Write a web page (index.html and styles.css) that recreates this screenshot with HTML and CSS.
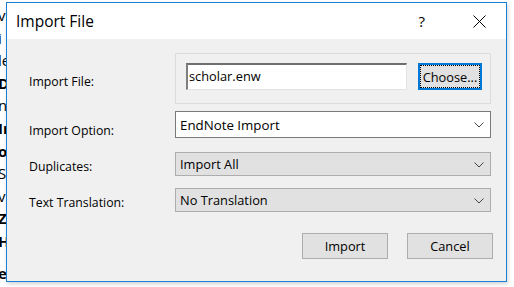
FILE: index.html
```html
<!DOCTYPE html>
<html>
<head>
<meta charset="utf-8">
<link rel="stylesheet" href="styles.css">
</head>
<body>
<div class="desk">
  <div class="page">
    <div class="ln">vo</div>
    <div class="ln">i</div>
    <div class="ln">le</div>
    <div class="ln b">D</div>
    <div class="ln">n</div>
    <div class="ln b">Ir</div>
    <div class="ln b">or</div>
    <div class="ln">Se</div>
    <div class="ln">vi</div>
    <div class="ln b">Zi</div>
    <div class="ln b">H</div>
    <div class="ln b last">e&nbsp;&nbsp;p&nbsp;&nbsp;&nbsp;&nbsp;&nbsp;&nbsp;&nbsp;&nbsp;&nbsp;&nbsp;&nbsp;&nbsp;&nbsp;&nbsp;&nbsp;&nbsp;&nbsp;g&nbsp;&nbsp;&nbsp;&nbsp;&nbsp;&nbsp;&nbsp;&nbsp;&nbsp;&nbsp;&nbsp;&nbsp;&nbsp;&nbsp;&nbsp;&nbsp;&nbsp;&nbsp;&nbsp;&nbsp;&nbsp;&nbsp;&nbsp;&nbsp;&nbsp;&nbsp;&nbsp;&nbsp;&nbsp;&nbsp;&nbsp;&nbsp;&nbsp;&nbsp;&nbsp;&nbsp;g</div>
  </div>

  <div class="dialog">
    <div class="titlebar">
      <span class="title">Import File</span>
      <div class="tb-btns">
        <span class="help">?</span>
        <svg class="close" width="13" height="13" viewBox="0 0 13 13"><path d="M0.5 0.5 L12.5 12.5 M12.5 0.5 L0.5 12.5" stroke="#000" stroke-width="1" fill="none"/></svg>
      </div>
    </div>
    <div class="body">
      <div class="row">
        <span class="label l-file">Import File:</span>
        <div class="group">
          <div class="input">scholar.enw</div>
          <button class="btn choose">Choose...</button>
        </div>
      </div>
      <div class="row r-opt">
        <span class="label l-opt">Import Option:</span>
        <div class="select white">
          <span>EndNote Import</span>
          <svg class="chev" width="10" height="6" viewBox="0 0 10 6"><path d="M0.5 0.5 L5 5 L9.5 0.5" stroke="#444" stroke-width="1" fill="none"/></svg>
        </div>
      </div>
      <div class="row r-dup">
        <span class="label l-dup">Duplicates:</span>
        <div class="select gray">
          <span>Import All</span>
          <svg class="chev" width="10" height="6" viewBox="0 0 10 6"><path d="M0.5 0.5 L5 5 L9.5 0.5" stroke="#444" stroke-width="1" fill="none"/></svg>
        </div>
      </div>
      <div class="row r-tr">
        <span class="label l-tr">Text Translation:</span>
        <div class="select gray">
          <span>No Translation</span>
          <svg class="chev" width="10" height="6" viewBox="0 0 10 6"><path d="M0.5 0.5 L5 5 L9.5 0.5" stroke="#444" stroke-width="1" fill="none"/></svg>
        </div>
      </div>
      <div class="actions">
        <button class="btn act">Import</button>
        <button class="btn act">Cancel</button>
      </div>
    </div>
  </div>
</div>
</body>
</html>
```

FILE: styles.css
```css
* { box-sizing: border-box; }
html, body { margin: 0; padding: 0; }
body {
  background: #fff;
  font-family: "Open Sans", "Noto Sans", sans-serif;
  width: 514px;
  height: 287px;
  overflow: hidden;
}
.desk {
  position: relative;
  width: 514px;
  height: 287px;
}
.page {
  padding-top: 4px;
  margin-left: -2px;
  font-size: 15px;
  color: #000;
  font-family: "Open Sans", sans-serif;
}
.ln {
  height: 22.6px;
  line-height: 22px;
  white-space: nowrap;
}
.ln.b { font-weight: 700; }
.ln.last { margin-top: 9px; }

.dialog {
  position: absolute;
  left: 6px;
  top: 2px;
  width: 501px;
  height: 280px;
  border: 1px solid #1a7fd6;
  background: #f0f0f0;
  box-shadow: 1px 2px 4px rgba(0,0,0,0.18);
  display: flex;
  flex-direction: column;
}
.titlebar {
  height: 36px;
  background: #fff;
  display: flex;
  align-items: center;
  justify-content: space-between;
  padding: 0 20px 0 9px;
  flex: none;
}
.title {
  font-size: 15.5px;
  color: #000;
  margin-top: -1px;
}
.tb-btns {
  display: flex;
  align-items: center;
  gap: 48px;
}
.help {
  font-size: 15px;
  line-height: 16px;
  color: #000;
  margin-top: -1px;
}
.close { display: block; margin-top: 1px; }

.body {
  flex: 1;
  padding: 14px 13px 0 22px;
  font-size: 12.3px;
  color: #000;
}
.row {
  display: grid;
  grid-template-columns: 146px 316px;
  align-items: start;
}
.label {
  line-height: 16px;
  white-space: nowrap;
}
.l-file { padding-top: 21px; }
.l-opt { padding-top: 12px; }
.l-dup { padding-top: 7px; }
.l-tr { padding-top: 7px; }
.r-opt { margin-top: 7px; }
.r-dup { margin-top: 13px; }
.r-tr { margin-top: 12px; }

.group {
  height: 51px;
  border: 1px solid #dcdcdc;
  padding: 9px 8px 0 10px;
  display: flex;
  gap: 11px;
}
.input {
  width: 221px;
  height: 27px;
  background: #fff;
  border-style: solid;
  border-width: 2px 1px 1px 2px;
  border-color: #6e6e6e #e3e3e3 #e3e3e3 #7f7f7f;
  padding: 0 0 0 1px;
  font-size: 12.8px;
  line-height: 22px;
  white-space: nowrap;
}
.btn {
  font-family: "Open Sans", "Noto Sans", sans-serif;
  color: #000;
  background: #e1e1e1;
  border: 1px solid #adadad;
  padding: 0;
  margin: 0;
  font-size: 12.8px;
}
.choose {
  width: 64px;
  height: 27px;
  border: 2px solid #0078d7;
  outline: 1px dotted #000;
  outline-offset: -3px;
  line-height: 20px;
}
.select {
  display: flex;
  align-items: center;
  justify-content: space-between;
  padding: 0 6px 0 4px;
  font-size: 12.8px;
  white-space: nowrap;
}
.select.white {
  height: 27px;
  background: #fff;
  border: 1px solid #7a7a7a;
  font-size: 13.3px;
}
.select.gray {
  height: 24px;
  background: #e1e1e1;
  border: 1px solid #adadad;
}
.chev { display: block; margin-top: 1px; }
.actions {
  display: flex;
  justify-content: flex-end;
  gap: 19px;
  margin-top: 21px;
}
.act {
  width: 86px;
  height: 26px;
  line-height: 22px;
}
```
